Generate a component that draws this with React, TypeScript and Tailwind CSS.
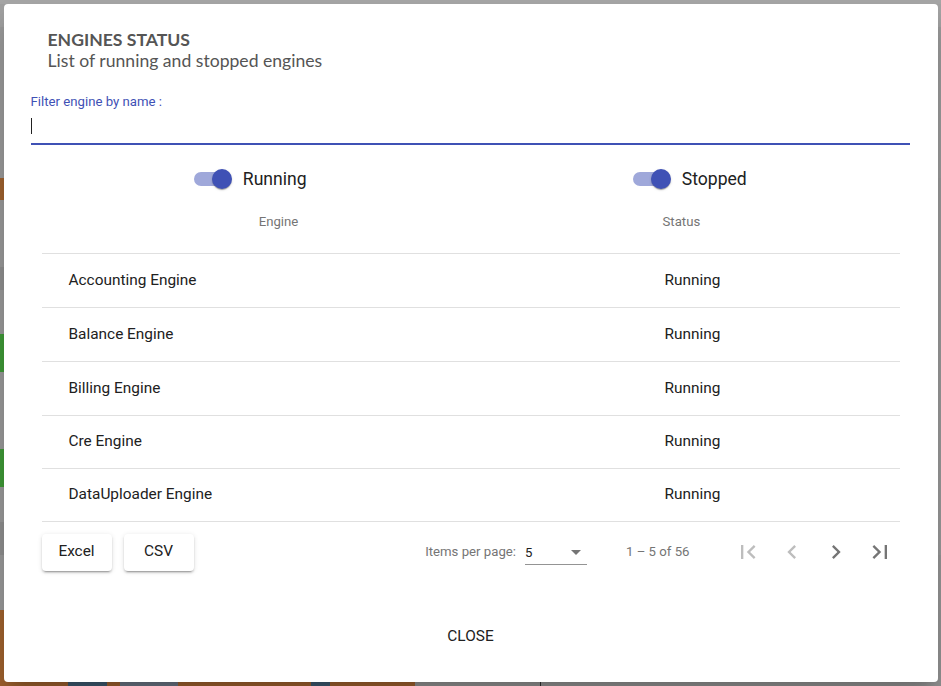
import React from "react";

const engines = [
  { name: "Accounting Engine", status: "Running" },
  { name: "Balance Engine", status: "Running" },
  { name: "Billing Engine", status: "Running" },
  { name: "Cre Engine", status: "Running" },
  { name: "DataUploader Engine", status: "Running" },
];

const rowHeights = ["h-[54px]", "h-[54px]", "h-[54px]", "h-[53px]", "h-[53px]"];

// what shows of the page behind the dimmed overlay
const backdrop = [
  { h: "h-[4px]", left: "bg-[#a6a6a6]", right: "bg-[#a6a6a6]" },
  { h: "h-[23px]", left: "bg-[#a0a0a0]", right: "bg-[#a3a3a3]" },
  { h: "h-[151px]", left: "bg-[#9a9a9a]", right: "bg-[#9c9c9c]" },
  { h: "h-[22px]", left: "bg-[#a0622f]", right: "bg-[#9a9a9a]" },
  { h: "h-[67px]", left: "bg-[#999999]", right: "bg-[#9a9a9a]" },
  { h: "h-[23px]", left: "bg-[#8f8f8f]", right: "bg-[#9a9a9a]" },
  { h: "h-[44px]", left: "bg-[#999999]", right: "bg-[#9a9a9a]" },
  { h: "h-[38px]", left: "bg-[#3f9a37]", right: "bg-[#9a9a9a]" },
  { h: "h-[77px]", left: "bg-[#999999]", right: "bg-[#9a9a9a]" },
  { h: "h-[38px]", left: "bg-[#3f9a37]", right: "bg-[#9a9a9a]" },
  { h: "h-[35px]", left: "bg-[#999999]", right: "bg-[#9a9a9a]" },
  { h: "h-[33px]", left: "bg-[#8f8f8f]", right: "bg-[#9a9a9a]" },
  { h: "h-[55px]", left: "bg-[#999999]", right: "bg-[#969696]" },
];

const raised =
  "shadow-[0_3px_1px_-2px_rgba(0,0,0,0.2),0_2px_2px_0_rgba(0,0,0,0.14),0_1px_5px_0_rgba(0,0,0,0.12)]";

function Toggle({ label }: { label: string }) {
  return (
    <div className="flex items-center">
      <div className="relative flex h-[24px] w-[40px] items-center">
        <div className="h-[14px] w-[36px] rounded-full bg-[#9fa8da]" />
        <div className="absolute left-[18px] top-[2px] h-[20px] w-[20px] rounded-full bg-[#3f51b5] shadow-[0_2px_1px_-1px_rgba(0,0,0,0.2),0_1px_1px_0_rgba(0,0,0,0.14),0_1px_3px_0_rgba(0,0,0,0.12)]" />
      </div>
      <span className="ml-[9px] text-[17.6px] leading-[24px] text-[#212121]">{label}</span>
    </div>
  );
}

function PageIcon({ d, disabled }: { d: string; disabled?: boolean }) {
  return (
    <button className="flex h-[40px] w-[40px] items-center justify-center">
      <svg viewBox="0 0 24 24" className={`h-[28px] w-[28px] ${disabled ? "fill-[#bdbdbd]" : "fill-[#757575]"}`}>
        <path d={d} />
      </svg>
    </button>
  );
}

export default function App() {
  return (
    <div className="relative h-[686px] w-[941px] overflow-hidden bg-[#9a9a9a] font-['Roboto',sans-serif]">
      {/* dimmed page behind the dialog */}
      <div className="flex h-full flex-col">
        {backdrop.map((r, i) => (
          <div key={i} className={`flex ${r.h}`}>
            <div className={`w-[415px] ${r.left}`} />
            <div className={`flex-1 ${r.right}`} />
          </div>
        ))}
        <div className="flex h-[76px]">
          <div className="flex w-[415px] items-end bg-[#a0622e]">
            <div className="ml-[68px] h-[5px] w-[39px] bg-[#3d5a70]" />
            <div className="ml-[13px] h-[5px] w-[58px] bg-[#6b7585]" />
            <div className="ml-[133px] h-[5px] w-[19px] bg-[#3d5a70]" />
          </div>
          <div className="flex flex-1 items-end bg-[#949494]">
            <div className="ml-[125px] h-[5px] w-px bg-[#333]" />
          </div>
        </div>
      </div>

      {/* dialog */}
      <div className="absolute inset-0 flex items-center justify-center">
        <div className="h-[678px] w-[934px] rounded-[4px] bg-white shadow-[0_11px_15px_-7px_rgba(0,0,0,0.2),0_24px_38px_3px_rgba(0,0,0,0.14)]">
          <div className="pl-[44px] pt-[26px] font-['Lato',sans-serif] text-[#555555]">
            <h2 className="text-[17.6px] font-bold leading-[20px]">ENGINES STATUS</h2>
            <p className="text-[17.6px] leading-[22px]">List of running and stopped engines</p>
          </div>

          <div className="pl-[27px] pr-[28px]">
            <label className="mt-[22px] block text-[13.2px] leading-[16px] text-[#3f51b5]">Filter engine by name :</label>
            <div className="flex h-[35px] items-center border-b-2 border-[#3f51b5] pb-[2px]">
              <div className="h-[16px] w-px bg-[#212121]" />
            </div>

            <div className="mt-[22px] grid grid-cols-2">
              <div className="flex justify-center">
                <Toggle label="Running" />
              </div>
              <div className="flex justify-center">
                <Toggle label="Stopped" />
              </div>
            </div>

            <div className="ml-[11px] mr-[10px]">
              <div className="flex h-[63px] items-center border-b border-[#e0e0e0] text-[13.2px] text-[#757575]">
                <div className="w-[474px] text-center">Engine</div>
                <div className="pl-[147px]">Status</div>
              </div>
              {engines.map((e, i) => (
                <div key={e.name} className={`flex items-center border-b border-[#e0e0e0] text-[15.4px] text-[#212121] ${rowHeights[i]}`}>
                  <div className="w-[472px] pl-[27px]">{e.name}</div>
                  <div className="pl-[151px]">{e.status}</div>
                </div>
              ))}

              <div className="flex h-[60px] items-center">
                <button className={`h-[37px] w-[70px] rounded-[4px] bg-white text-[15.4px] text-[#212121] ${raised}`}>
                  Excel
                </button>
                <button className={`ml-[12px] h-[37px] w-[70px] rounded-[4px] bg-white text-[15.4px] text-[#212121] ${raised}`}>
                  CSV
                </button>

                <div className="ml-auto flex items-center text-[13.2px] text-[#757575]">
                  <span>Items per page:</span>
                  <div className="ml-[9px] flex h-[25px] w-[62px] items-center justify-between border-b border-[#949494] pt-[2px]">
                    <span className="text-[#212121]">5</span>
                    <div className="mr-[6px] h-0 w-0 border-x-[5px] border-t-[5px] border-x-transparent border-t-[#757575]" />
                  </div>
                  <span className="ml-[39px]">1 – 5 of 56</span>
                  <div className="ml-[38px] flex gap-[4px]">
                    <PageIcon disabled d="M18.41 16.59L13.82 12l4.59-4.59L17 6l-6 6 6 6zM6 6h2v12H6z" />
                    <PageIcon disabled d="M15.41 7.41L14 6l-6 6 6 6 1.41-1.41L10.83 12z" />
                    <PageIcon d="M10 6L8.59 7.41 13.17 12l-4.58 4.59L10 18l6-6z" />
                    <PageIcon d="M5.59 7.41L10.18 12l-4.59 4.59L7 18l6-6-6-6zM16 6h2v12h-2z" />
                  </div>
                </div>
              </div>
            </div>
          </div>

          <div className="mt-[37px] flex justify-center">
            <button className="h-[36px] px-4 text-[15.4px] text-[#212121]">CLOSE</button>
          </div>
        </div>
      </div>
    </div>
  );
}
